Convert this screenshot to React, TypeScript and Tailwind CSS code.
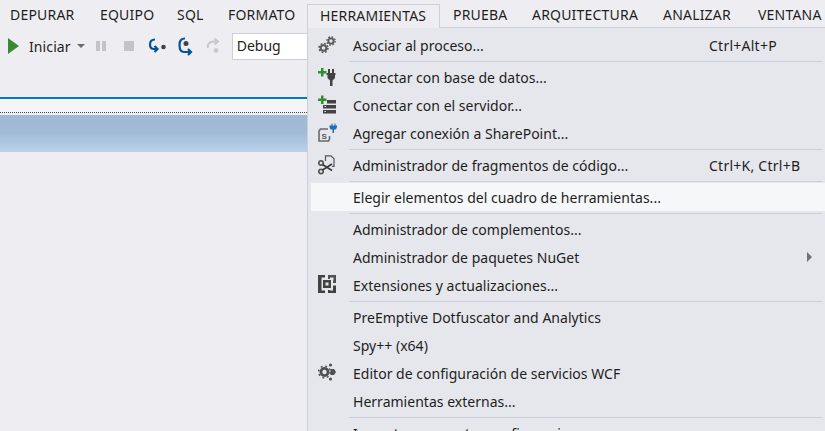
import { ReactNode } from 'react';

const topMenus = [
  { label: 'DEPURAR', width: 'w-[90px]' },
  { label: 'EQUIPO', width: 'w-[77px]' },
  { label: 'SQL', width: 'w-[51px]' },
  { label: 'FORMATO', width: 'w-[92px]' },
  { label: 'HERRAMIENTAS', width: 'w-[133px]' },
  { label: 'PRUEBA', width: 'w-[79px]' },
  { label: 'ARQUITECTURA', width: 'w-[131px]' },
  { label: 'ANALIZAR', width: 'w-[95px]' },
  { label: 'VENTANA', width: 'w-[67px]' },
];

function Gears() {
  return (
    <svg width="20" height="20" viewBox="0 0 20 20" fill="none" stroke="#5a5a5a">
      <circle cx="5.500" cy="13" r="2.800" strokeWidth="2" />
      <circle cx="5.500" cy="13" r="4.400" strokeWidth="1.600" strokeDasharray="1.800 1.650" />
      <circle cx="13" cy="6" r="2.600" strokeWidth="1.800" />
      <circle cx="13" cy="6" r="4.100" strokeWidth="1.500" strokeDasharray="1.600 1.620" />
    </svg>
  );
}

function Plug() {
  return (
    <svg width="20" height="20" viewBox="0 0 20 20">
      <path d="M0 4h3V1h2.500v3h3v2.500h-3v3H3v-3H0z" fill="#2f8f2f" />
      <path d="M10 2h2v4h2V2h2v4h1.500v2H8.500V6H10z" fill="#424242" />
      <path d="M9.500 8h7.500v3l-2.500 2.500V19h-2.500v-5.500L9.500 11z" fill="#424242" />
    </svg>
  );
}

function ServerAdd() {
  return (
    <svg width="20" height="20" viewBox="0 0 20 20">
      <path d="M0 3.500h3V.5h2.500v3h3V6h-3v3H3V6H0z" fill="#2f8f2f" />
      <path d="M9 5h9v3.500H9zM5 10h13v3.500H5zM5 15h13v3.500H5z" fill="#424242" />
      <path d="M6.500 11.500h1.500M6.500 16.500h1.500" stroke="#e6e7ec" />
    </svg>
  );
}

function SharePointPlug() {
  return (
    <svg width="20" height="20" viewBox="0 0 20 20">
      <path d="M10 6H2.500L1 8v10h9.500l1-2v-3" fill="none" stroke="#6a6a6a" strokeWidth="1.600" />
      <text x="3.500" y="16" fontSize="8" fontWeight="700" fill="#555" fontFamily="'Liberation Sans', sans-serif">S</text>
      <path d="M11.500 2.500h2V.5h1v2h2V.5h1v2h1.500V4l-1 2.500h-2V10H14.500V6.500h-2l-1-2.500z" fill="#1c6fb8" />
    </svg>
  );
}

function ScissorsDoc() {
  return (
    <svg width="20" height="20" viewBox="0 0 20 20" fill="none" stroke="#555">
      <path d="M7.500 6V.8h5.500l3 3v7.500h-2" strokeWidth="1.200" />
      <circle cx="3" cy="8" r="2.200" strokeWidth="1.700" />
      <circle cx="3" cy="16.500" r="2.200" strokeWidth="1.700" />
      <path d="M4.500 9.500 14 15.500M4.500 15 14 9" strokeWidth="1.700" stroke="#3a3a3a" />
    </svg>
  );
}

function Extensions() {
  return (
    <svg width="20" height="20" viewBox="0 0 20 20">
      <path d="M0 0h7v2.500H3.500v13H7V18H0z" fill="#424242" />
      <path fillRule="evenodd" d="M5 5h8v8H5zM7.500 7.500v3h3v-3z" fill="#424242" />
      <path fillRule="evenodd" d="M10 0h8v8h-3V5.500h.5v-3H12V4h-2z" fill="#505050" />
      <path d="M15 10.500h3V18h-8v-3h2v.5h3z" fill="#424242" />
    </svg>
  );
}

function ConfigGear() {
  return (
    <svg width="20" height="20" viewBox="0 0 20 20" fill="none" stroke="#505050">
      <circle cx="6.500" cy="9" r="3.600" strokeWidth="2.800" />
      <circle cx="6.500" cy="9" r="5.900" strokeWidth="1.400" strokeDasharray="2 2.630" />
      <circle cx="12.500" cy="2" r="1.600" fill="#505050" stroke="none" />
      <path d="M12.500 6h3.500l2 3-2 3h-3.500z" fill="#505050" stroke="none" />
      <circle cx="12.500" cy="16" r="1.600" fill="#505050" stroke="none" />
    </svg>
  );
}

function Row({ icon, label, shortcut, hover, arrow }: { icon?: ReactNode; label: string; shortcut?: string; hover?: boolean; arrow?: boolean }) {
  return (
    <div className={`ml-[3px] flex h-[28px] items-center ${hover ? 'bg-[#f6f7f9]' : ''}`}>
      <div className="flex w-[42px] justify-start pl-[7px]">{icon}</div>
      <span className="tracking-[0.02px]">{label}</span>
      {shortcut && <span className="ml-auto w-[116px] tracking-[0.25px]">{shortcut}</span>}
      {arrow && <span className="ml-auto mr-[13px] h-0 w-0 border-y-[5px] border-l-[5px] border-y-transparent border-l-[#717171]" />}
    </div>
  );
}

function Sep() {
  return (
    <div className="flex h-[4px] items-center pl-[41px] pr-[3px]">
      <div className="h-px w-full bg-[#cccedb]" />
    </div>
  );
}

export default function App() {
  return (
    <div className="relative h-[431px] w-[825px] overflow-hidden bg-[#eeeef2] font-['Noto_Sans',sans-serif] text-[14px] text-[#1e1e1e]">
      <div className="flex h-[27px] items-center pl-[10px] tracking-[0.2px]">
        {topMenus.map((m) =>
          m.label === 'HERRAMIENTAS' ? (
            <span key={m.label} className={`relative z-10 -ml-[13px] mr-[13px] mt-[4px] flex h-[24px] shrink-0 items-center whitespace-nowrap border border-b-0 border-[#cccedb] bg-[#eeeef2] pb-[2px] pl-[12px] ${m.width}`}>{m.label}</span>
          ) : (
            <span key={m.label} className={`shrink-0 whitespace-nowrap pt-[1px] ${m.width}`}>{m.label}</span>
          )
        )}
      </div>

      <div className="flex h-[34px] w-[307px] items-center pl-[8px] pt-[4px]">
        <svg width="12" height="16" viewBox="0 0 12 16"><path d="M0 0l11 8-11 8z" fill="#388a34" /></svg>
        <span className="ml-[9px] tracking-[0.1px]">Iniciar</span>
        <span className="ml-[6px] h-0 w-0 border-x-[4px] border-t-[4px] border-x-transparent border-t-[#6a6a6a]" />
        <svg className="ml-[10px]" width="12" height="12" viewBox="0 0 12 12"><path d="M1 1h4v10H1zM7 1h4v10H7z" fill="#c4c4c6" /></svg>
        <div className="ml-[17px] h-[10px] w-[10px] bg-[#c4c4c6]" />
        <svg className="ml-[14px]" width="20" height="16" viewBox="0 0 20 16" fill="none">
          <path d="M7 1.500C3 1.500 2 4 2 6.500S3 11 6 11h3M6.500 8l3 3-3 3" stroke="#00539c" strokeWidth="2.200" />
          <circle cx="15.500" cy="9" r="2.300" fill="#424242" />
        </svg>
        <svg className="ml-[10px]" width="16" height="19" viewBox="0 0 16 19" fill="none">
          <path d="M7 1.500C3 1.500 1.500 4 1.500 8s1.500 7 4.500 7h6M10 12l3 3-3 3" stroke="#00539c" strokeWidth="2.200" />
          <circle cx="8" cy="6.500" r="2.500" fill="#424242" />
        </svg>
        <svg className="ml-[12px]" width="16" height="16" viewBox="0 0 16 16" fill="none">
          <path d="M2 10C1 5 5 3 10 3.500M8.500 .5l3.500 3-3.500 3" stroke="#c8c8ca" strokeWidth="2" />
          <circle cx="10" cy="12.500" r="2.300" fill="#c8c8ca" />
        </svg>
        <div className="ml-[10px] flex h-[27px] flex-1 items-center border border-r-0 border-[#cccedb] bg-white pb-[1px] pl-[4px]">Debug</div>
      </div>

      <div className="mt-[36px] h-[2px] w-[307px] bg-[#007acc]" />
      <div className="h-[14px] w-[307px] border-b border-dotted border-[#444] bg-[#f5f5f5]" />
      <div className="mt-[2px] h-[37px] w-[307px] bg-gradient-to-b from-[#9fb8d3] via-[#a2bbd7] to-[#bad2ea]" />

      {/* open HERRAMIENTAS dropdown */}
      <div className="absolute left-[307px] top-[27px] w-[518px] border-l border-t border-[#cccedb] bg-[#e6e7ec] pt-[3px]">
        <Row icon={<Gears />} label="Asociar al proceso..." shortcut="Ctrl+Alt+P" />
        <Sep />
        <Row icon={<Plug />} label="Conectar con base de datos..." />
        <Row icon={<ServerAdd />} label="Conectar con el servidor..." />
        <Row icon={<SharePointPlug />} label="Agregar conexión a SharePoint..." />
        <Sep />
        <Row icon={<ScissorsDoc />} label="Administrador de fragmentos de código..." shortcut="Ctrl+K, Ctrl+B" />
        <Sep />
        <Row label="Elegir elementos del cuadro de herramientas..." hover />
        <Sep />
        <Row label="Administrador de complementos..." />
        <Row label="Administrador de paquetes NuGet" arrow />
        <Row icon={<Extensions />} label="Extensiones y actualizaciones..." />
        <Sep />
        <Row label="PreEmptive Dotfuscator and Analytics" />
        <Row label="Spy++ (x64)" />
        <Row icon={<ConfigGear />} label="Editor de configuración de servicios WCF" />
        <Row label="Herramientas externas..." />
        <Sep />
        <Row label="Importar y exportar configuraciones..." />
      </div>
    </div>
  );
}
